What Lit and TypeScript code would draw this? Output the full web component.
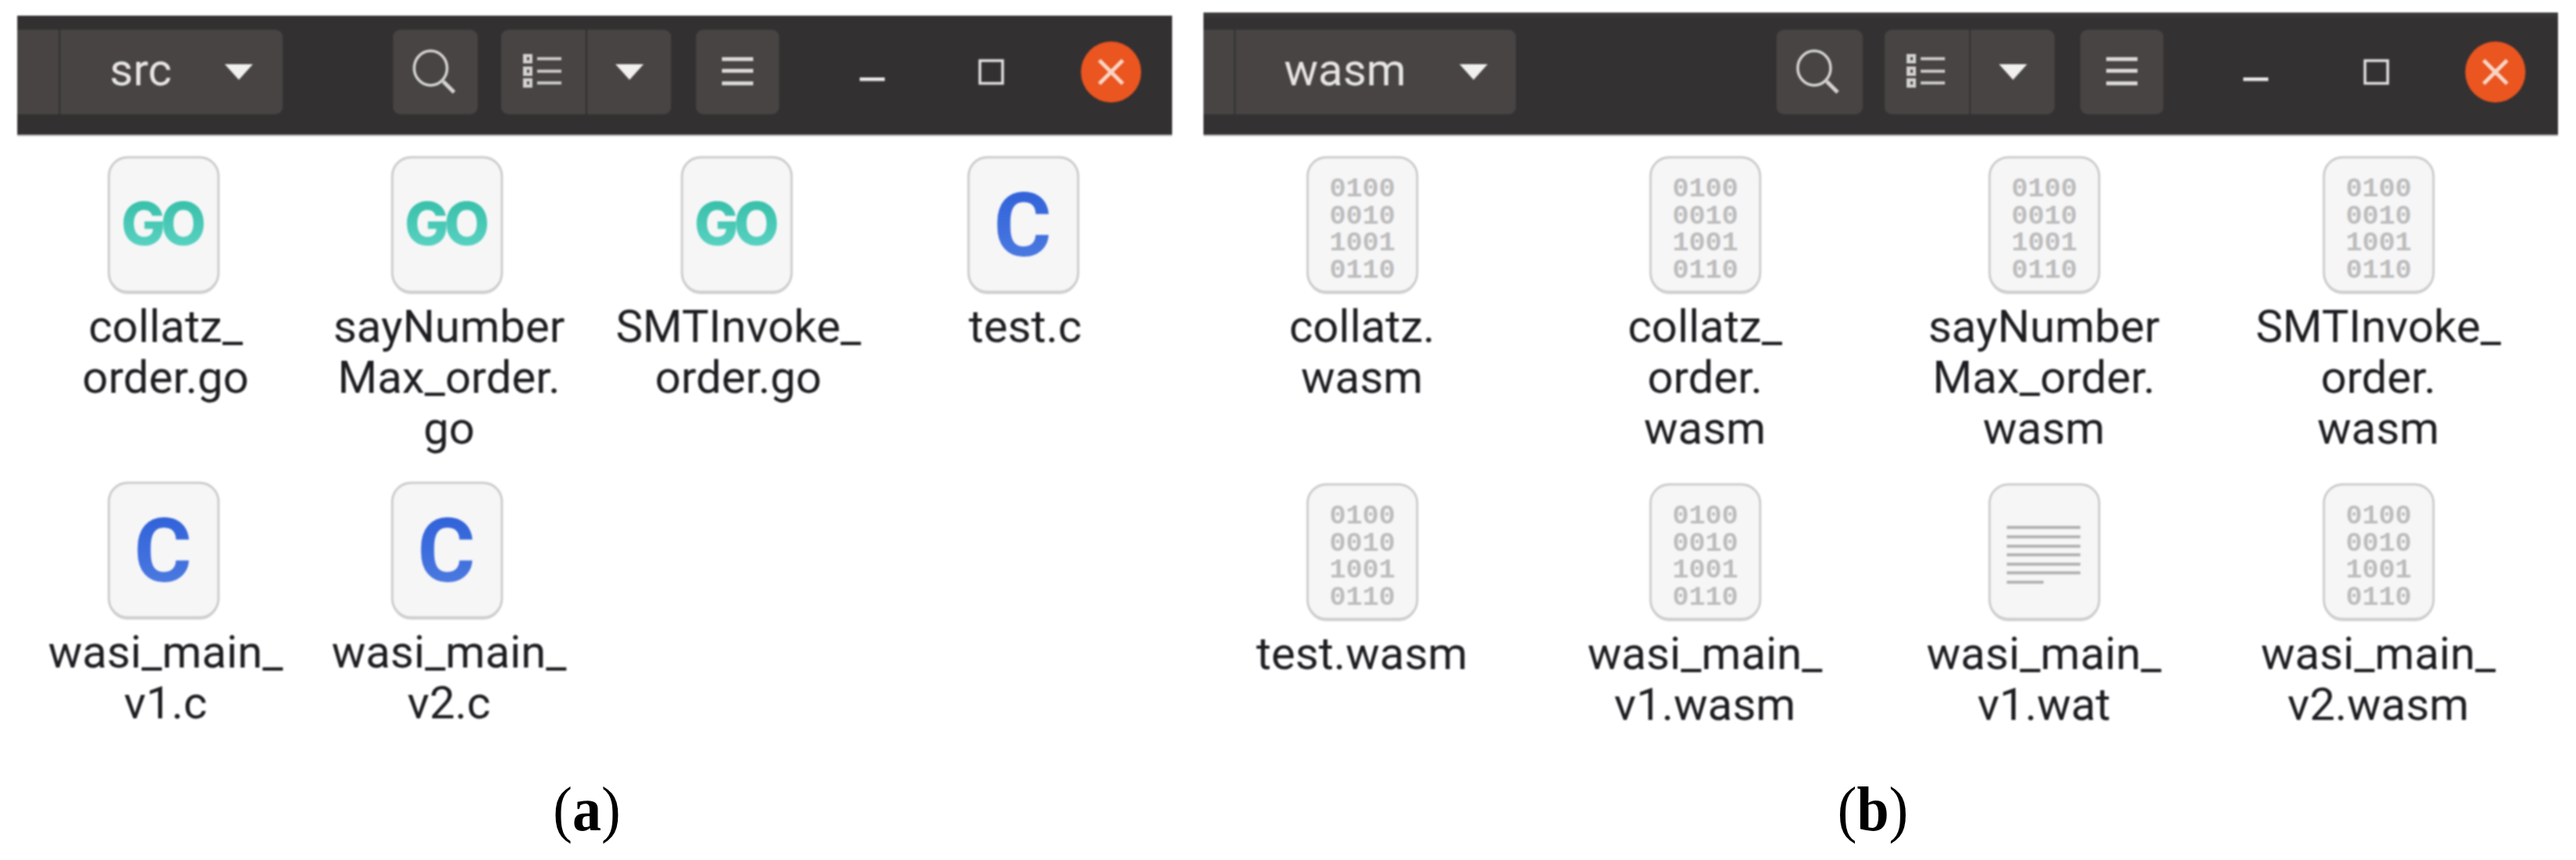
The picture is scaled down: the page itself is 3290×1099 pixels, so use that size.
import { LitElement, html, svg, css } from 'lit';
import { customElement } from 'lit/decorators.js';

type Kind = 'go' | 'c' | 'bin' | 'txt';
interface FileEntry { kind: Kind; lines: string[]; }

const SRC_FILES: FileEntry[] = [
  { kind: 'go', lines: ['collatz_', 'order.go'] },
  { kind: 'go', lines: ['sayNumber', 'Max_order.', 'go'] },
  { kind: 'go', lines: ['SMTInvoke_', 'order.go'] },
  { kind: 'c', lines: ['test.c'] },
  { kind: 'c', lines: ['wasi_main_', 'v1.c'] },
  { kind: 'c', lines: ['wasi_main_', 'v2.c'] },
];

const WASM_FILES: FileEntry[] = [
  { kind: 'bin', lines: ['collatz.', 'wasm'] },
  { kind: 'bin', lines: ['collatz_', 'order.', 'wasm'] },
  { kind: 'bin', lines: ['sayNumber', 'Max_order.', 'wasm'] },
  { kind: 'bin', lines: ['SMTInvoke_', 'order.', 'wasm'] },
  { kind: 'bin', lines: ['test.wasm'] },
  { kind: 'bin', lines: ['wasi_main_', 'v1.wasm'] },
  { kind: 'txt', lines: ['wasi_main_', 'v1.wat'] },
  { kind: 'bin', lines: ['wasi_main_', 'v2.wasm'] },
];

const BITS = ['0100', '0010', '1001', '0110'];
const TEXT_ROWS = [55, 67, 79, 90, 102, 113, 125];

const triangle = html`<svg class="tri" width="36" height="22" viewBox="0 0 36 22"><path d="M0 1H36L18 21Z" fill="#f1f0ef"/></svg>`;

const searchIcon = html`<svg width="108" height="108" viewBox="0 0 108 108" fill="none" stroke="#d6d5d4">
  <ellipse cx="48" cy="49" rx="21" ry="22" stroke-width="3.5"/><path d="M64 66L78 80" stroke-width="5"/></svg>`;

const listIcon = html`<svg width="108" height="108" viewBox="0 0 108 108">
  ${[31, 47, 62].map(y => svg`
    <rect x="28" y=${y} width="12" height="12" fill="#d2d1d0"/>
    <rect x="33" y=${y + 4} width="3" height="4" fill="#4a4747"/>
    <rect x="46" y=${y + 4} width="31" height="4" fill="#c9c8c7"/>`)}
</svg>`;

const menuIcon = html`<svg width="106" height="108" viewBox="0 0 106 108" fill="#d9d8d7">
  <rect x="33" y="35" width="40" height="5"/><rect x="33" y="50" width="40" height="5"/><rect x="33" y="66" width="40" height="5"/></svg>`;

const minIcon = html`<svg width="72" height="108" viewBox="0 0 72 108"><rect x="20" y="61" width="32" height="4.5" fill="#ecebea"/></svg>`;

const maxIcon = html`<svg width="72" height="108" viewBox="0 0 72 108" fill="none" stroke="#e0dfde" stroke-width="3.5">
  <rect x="21.5" y="39.5" width="29" height="29"/></svg>`;

const closeIcon = html`<svg width="80" height="108" viewBox="0 0 80 108">
  <ellipse cx="40" cy="54" rx="38.5" ry="39" fill="#ea5520"/>
  <path d="M25 39L55 69M55 39L25 69" stroke="#f8d6c6" stroke-width="5"/></svg>`;

function fileIcon(kind: Kind) {
  return html`<svg class="icon" width="144" height="178" viewBox="0 0 144 178">
    <defs>
      <linearGradient id="go-fill" x1="0" y1="0" x2="0" y2="1"><stop offset="0" stop-color="#2fbba3"/><stop offset="1" stop-color="#62d6c8"/></linearGradient>
      <linearGradient id="c-fill" x1="0" y1="0" x2="0" y2="1"><stop offset="0" stop-color="#2a5cd8"/><stop offset="1" stop-color="#5280e2"/></linearGradient>
    </defs>
    <rect x="2" y="5" width="140" height="172" rx="24" fill="#d8d8d8"/>
    <rect x="2" y="2" width="140" height="172" rx="24" fill="#f6f6f7" stroke="#cdcdcd" stroke-width="3"/>
    ${kind === 'go' ? svg`<text class="go" x="69" y="114" text-anchor="middle" fill="url(#go-fill)">GO</text>` : ''}
    ${kind === 'c' ? svg`<text class="c" x="71" y="128" text-anchor="middle" fill="url(#c-fill)">C</text>` : ''}
    ${kind === 'bin' ? BITS.map((b, i) => svg`<text class="bits" x="72" y=${52 + i * 34.5} text-anchor="middle">${b}</text>`) : ''}
    ${kind === 'txt' ? TEXT_ROWS.map((y, i) => svg`<rect x="24" y=${y} width=${i === 6 ? 47 : 94} height="4" fill="#b4b4b4"/>`) : ''}
  </svg>`;
}

@customElement('app-root')
export class AppRoot extends LitElement {
  static styles = css`
    :host {
      display: flex;
      align-items: flex-start;
      width: 3290px;
      height: 1099px;
      overflow: hidden;
      background: #fff;
      font-family: Roboto, "Noto Sans", sans-serif;
    }
    .fig-a { width: 1475px; margin: 20px 0 0 22px; --body: 814px; }
    .fig-b { width: 1730px; margin: 16px 0 0 40px; --body: 814px; }

    .window { filter: blur(0.9px); }
    .bar {
      display: flex;
      align-items: flex-start;
      height: 154px;
      box-sizing: border-box;
      padding-top: 18px;
      background: #333031;
      border-bottom: 2px solid #bdbdbd;
    }
    .fig-b .bar { height: 158px; padding-top: 22px; background: linear-gradient(#3a3838 0, #3a3838 3px, #343132 8px); }

    .btn {
      display: flex;
      align-items: center;
      flex: none;
      height: 108px;
      background: #474443;
      border-radius: 9px;
    }
    .seg-l { border-radius: 9px 0 0 9px; }
    .seg-r { border-radius: 0 9px 9px 0; margin-left: 2px; }
    .crumb-first { border-radius: 0; }
    .crumb {
      margin-left: 2px;
      border-radius: 0 9px 9px 0;
      padding-left: 63px;
      gap: 68px;
      color: #e6e5e4;
      font-size: 58px;
      line-height: 1;
    }
    .crumb span { position: relative; top: -3px; }
    .view-arrow { justify-content: center; width: 107px; }
    .ctl { flex: none; height: 108px; }

    .fig-a .c1 { width: 53px; }
    .fig-a .c2 { width: 284px; box-sizing: border-box; }
    .fig-a .search { margin-left: 141px; width: 108px; }
    .fig-a .view { margin-left: 30px; }
    .fig-a .menu { margin-left: 32px; }
    .fig-a .min { margin-left: 83px; }
    .fig-a .max { margin-left: 80px; }
    .fig-a .close { margin-left: 77px; }

    .fig-b .c1 { width: 39px; }
    .fig-b .c2 { width: 358px; box-sizing: border-box; padding-left: 62px; }
    .fig-b .search { margin-left: 333px; width: 110px; }
    .fig-b .view { margin-left: 28px; }
    .fig-b .menu { margin-left: 33px; }
    .fig-b .min { margin-left: 82px; }
    .fig-b .max { margin-left: 82px; }
    .fig-b .close { margin-left: 76px; }

    .files {
      display: grid;
      height: var(--body);
      box-sizing: border-box;
      align-content: start;
      padding-top: 25px;
      background: #fff;
    }
    .fig-a .files { grid-template-columns: 374px 350px 389px 344px; grid-auto-rows: 416px; }
    .fig-b .files { grid-template-columns: 405px 471px 395px 459px; grid-auto-rows: 418px; }

    .file { display: flex; flex-direction: column; align-items: center; }
    .icon { display: block; flex: none; }
    .icon text { font-family: Roboto, sans-serif; }
    .icon .go { font-family: Inter, Roboto, sans-serif; font-size: 75px; font-weight: 800; letter-spacing: -6px; }
    .icon .c { font-size: 113px; font-weight: 700; }
    .icon .bits { font-family: "Liberation Mono", monospace; font-size: 35px; font-weight: 700; fill: #bdbdbd; }
    .label {
      margin-top: 8px;
      font-size: 58px;
      line-height: 65px;
      color: #1e1e22;
      text-align: center;
      white-space: nowrap;
    }
    .fig-a .label { padding-left: 5px; }

    figcaption {
      padding-right: 20px;
      font-family: "Liberation Serif", serif;
      font-size: 74px;
      line-height: 90px;
      text-align: center;
      color: #000;
    }
    figcaption span { display: inline-block; transform: scaleY(1.1); }
    figure { margin: 0; }
    b { font-weight: 700; }
  `;

  private renderFile(f: FileEntry) {
    return html`<div class="file">
      ${fileIcon(f.kind)}
      <div class="label">${f.lines.map((l, i) => html`${i ? html`<br>` : ''}${l}`)}</div>
    </div>`;
  }

  private renderWindow(cls: string, title: string, caption: string, files: FileEntry[]) {
    return html`<figure class=${cls}>
      <div class="window">
        <div class="bar">
          <div class="btn c1 crumb-first"></div>
          <div class="btn c2 crumb"><span>${title}</span>${triangle}</div>
          <div class="btn search">${searchIcon}</div>
          <div class="btn view seg-l">${listIcon}</div>
          <div class="btn seg-r view-arrow">${triangle}</div>
          <div class="btn menu">${menuIcon}</div>
          <div class="ctl min">${minIcon}</div>
          <div class="ctl max">${maxIcon}</div>
          <div class="ctl close">${closeIcon}</div>
        </div>
        <div class="files">${files.map(f => this.renderFile(f))}</div>
      </div>
      <figcaption><span>(<b>${caption}</b>)</span></figcaption>
    </figure>`;
  }

  render() {
    return html`
      ${this.renderWindow('fig-a', 'src', 'a', SRC_FILES)}
      ${this.renderWindow('fig-b', 'wasm', 'b', WASM_FILES)}
    `;
  }
}

declare global {
  interface HTMLElementTagNameMap { 'app-root': AppRoot; }
}
